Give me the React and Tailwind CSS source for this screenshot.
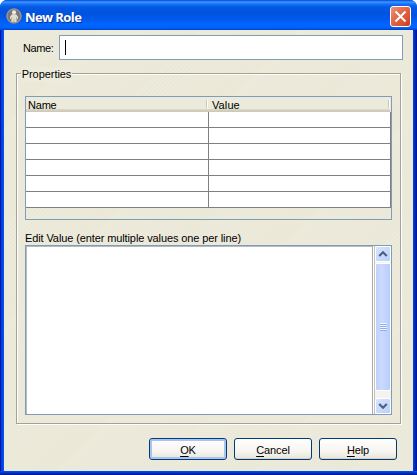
import React from "react";

function TitleBar() {
  return (
    <div className="flex h-[30px] shrink-0 items-start bg-[linear-gradient(180deg,#0047d8_0px,#3f96ff_2px,#1673f5_4px,#0358e4_7px,#0053df_14px,#005bf0_20px,#0066ff_25px,#0061f8_28px,#0040c8_30px)] pl-[6px] pr-[6px] pt-[6px]">
      <svg className="mt-[2px] shrink-0" width="16" height="16" viewBox="0 0 16 16">
        <circle cx="8" cy="8" r="7.8" fill="#77777f" />
        <circle cx="8" cy="8" r="7" fill="none" stroke="#a09da2" strokeWidth="1" />
        <circle cx="8" cy="4.2" r="2" fill="#f0eedf" />
        <path d="M6 6.3h4l2 2.4V11h-1.4V14H5.400V11H4V8.700z" fill="#e2e0cc" />
        <path d="M8 11v3M5.600 9v2M10.400 9v2" stroke="#98978a" strokeWidth=".7" />
      </svg>
      <div className="ml-[3px] mt-[3px] h-[16px] whitespace-nowrap font-['Open_Sans','Noto_Sans',sans-serif] text-[13px] leading-[16px] font-bold tracking-[-0.6px] text-white [text-shadow:1px_1px_0_#0a2f8c]">
        New Role
      </div>
      <div className="ml-auto flex h-[21px] w-[21px] items-center justify-center rounded-[3px] border border-white bg-[linear-gradient(135deg,#ee9478_0%,#e4684a_40%,#dc5030_75%,#c23c18_100%)]">
        <svg width="13" height="13" viewBox="0 0 13 13">
          <path d="M1.500 1.500l10 10M11.500 1.500l-10 10" stroke="#fff" strokeWidth="2" />
        </svg>
      </div>
    </div>
  );
}

function HeaderCell({ label, className }) {
  return (
    <div className={`flex h-[15px] bg-[linear-gradient(180deg,#ebeadb_0px,#ebeadb_12px,#dedbcb_12px,#d6d2c2_13px,#cbc7b8_15px)] ${className}`}>
      <span className="h-[15px] pt-px leading-[15px]">{label}</span>
      <span className="ml-auto mt-[3px] h-[8px] w-[2px] border-l border-r border-l-[#c7c5b2] border-r-white" />
    </div>
  );
}

function PropertyTable() {
  return (
    <div className="h-[124px] w-[367px] border border-[#7f9db9]">
      <div className="flex h-[15px] w-[364px]">
        <HeaderCell label="Name" className="w-[182px] pl-[2px] tracking-[-0.2px]" />
        <HeaderCell label="Value" className="w-[182px] pl-[4px] tracking-[0.1px]" />
      </div>
      {[0, 1, 2, 3, 4, 5].map((row) => (
        <div key={row} className="flex h-[16px] w-[365px] border-b border-[#808080] bg-white">
          <div className="w-[183px] border-r border-[#808080]" />
          <div className="w-[182px] border-r border-[#808080]" />
        </div>
      ))}
    </div>
  );
}

function ArrowButton({ down }) {
  return (
    <div className="flex h-[16px] w-[16px] shrink-0 items-center justify-center rounded-[2px] border border-white bg-[linear-gradient(135deg,#d9e5ff,#b9cffa)]">
      <svg className={down ? "rotate-180" : ""} width="10" height="8" viewBox="0 0 10 8">
        <path d="M1.200 6L5 2.200 8.800 6" fill="none" stroke="#4d6185" strokeWidth="2.200" />
      </svg>
    </div>
  );
}

function ScrollBar() {
  return (
    <div className="flex h-full w-[19px] flex-col border-l border-[#aca9a6]">
      <div className="flex h-full w-[18px] flex-col border-l border-white">
        <div className="flex h-full w-[17px] flex-col border-l border-[#c4c2c5] bg-[#f4f3ee]">
          <ArrowButton />
          <div className="mt-px flex h-[128px] w-[16px] flex-col items-center justify-center rounded-[2px] border border-white bg-[linear-gradient(90deg,#bfd1fc,#cbdaff_40%,#b9cdf8)]">
            <div className="h-[8px] w-[7px] bg-[repeating-linear-gradient(180deg,#f1f6ff_0px,#f1f6ff_1px,#8caff0_1px,#8caff0_2px)]" />
          </div>
          <div className="mt-auto">
            <ArrowButton down />
          </div>
        </div>
      </div>
    </div>
  );
}

function DialogButton({ first, rest, primary }) {
  return (
    <button
      className={`flex h-[22px] w-[78px] items-center justify-center rounded-[3px] border border-[#003c74] bg-[linear-gradient(180deg,#ffffff_0%,#f6f4ef_65%,#e8e4d9_100%)] pt-[2px] leading-[15px] tracking-[-0.1px] ${
        primary ? "shadow-[inset_0_0_0_2px_#a9c3f3]" : "shadow-[inset_0_-1px_0_0_#d6d0c5]"
      }`}
    >
      <span className="underline decoration-1 underline-offset-2">{first}</span>
      <span>{rest}</span>
    </button>
  );
}

export default function App() {
  return (
    <div className="flex h-[475px] w-[417px] flex-col overflow-hidden rounded-t-[7px] bg-[#0048dc] font-['Liberation_Sans',Arial,sans-serif] text-[11px] text-black">
      <TitleBar />
      <div className="h-[445px] bg-[linear-gradient(90deg,#0014a8_0px,#0014a8_1px,#0038dc_1px,#0058ee_4px,transparent_4px,transparent_413px,#0048dc_413px,#0026bd_415px,#00138c_417px)] px-[4px]">
        <div className="flex h-[441px] flex-col bg-[#ece9d8] bg-[repeating-linear-gradient(135deg,#efeddf_0px,#eae8d7_1.4px,#ece7d9_2.8px)]">
          <div className="flex h-[43px] shrink-0 pt-[5px]">
            <label className="w-[55px] shrink-0 pl-[19px] pt-[6px] leading-[15px] tracking-[-0.4px]">Name:</label>
            <div className="h-[25px] w-[344px] border border-[#7f9db9] bg-white pl-[5px] pt-[4px]">
              <div className="h-[15px] w-px bg-black" />
            </div>
          </div>
          <div className="ml-[12px] h-[351px] w-[385px] border border-[#a5a293] shadow-[1px_1px_0_#fff,inset_1px_1px_0_#fff]">
            <div className="-mt-[7px] ml-[4px] flex h-[15px] w-[51px] justify-center bg-[#edebdc] leading-[15px] tracking-[-0.05px]">Properties</div>
            <div className="ml-[8px] mt-[14px]">
              <PropertyTable />
            </div>
            <div className="ml-[8px] mt-[11px] h-[14px] whitespace-nowrap leading-[14px] tracking-[-0.11px]">
              Edit Value (enter multiple values one per line)
            </div>
            <div className="ml-[8px] flex h-[170px] w-[367px] justify-end border border-[#7f9db9] bg-white shadow-[inset_1px_1px_0_#b9b8bb]">
              <ScrollBar />
            </div>
          </div>
          <div className="ml-[145px] mt-[14px] flex gap-[7px]">
            <DialogButton first="O" rest="K" primary />
            <DialogButton first="C" rest="ancel" />
            <DialogButton first="H" rest="elp" />
          </div>
        </div>
        <div className="-mx-[4px] h-[4px] bg-[linear-gradient(180deg,#0054ed,#0038d0_40%,#00138c)]" />
      </div>
    </div>
  );
}
